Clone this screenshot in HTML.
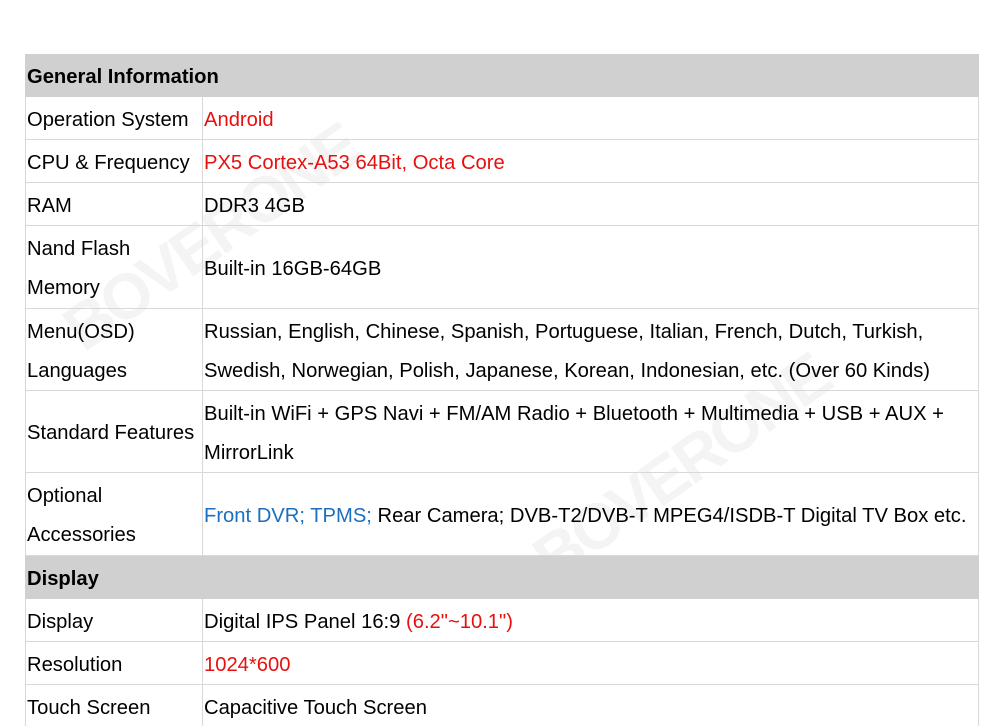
<!DOCTYPE html><html><head><style>
html,body{margin:0;width:1000px;height:726px;overflow:hidden}
body{background:#fff;position:relative;font-family:"Liberation Sans",Arial,sans-serif;font-size:20.2px;color:#000}
.r{position:absolute;left:25px;width:954px;border-bottom:1px solid #d8d8d8;box-sizing:border-box;z-index:1}
.h{background:#d0d0d0;font-weight:bold;border-bottom:none}
.c{position:absolute;top:4px;bottom:0;display:flex;align-items:center;line-height:39px}
.l{left:2px;width:175px}.v{left:179px;right:0}
.d{position:absolute;left:177px;top:0;bottom:0;border-left:1px solid #d8d8d8}
.red{color:#e8100e}.blue{color:#1a6fc0}
.wm{position:absolute;font-weight:bold;font-size:64px;color:#f4f4f4;transform:rotate(-35deg);font-family:"Liberation Sans",sans-serif;z-index:0;letter-spacing:-3px}
.t{position:absolute;left:25px;top:54px;width:954px;height:680px;border:1px solid #d8d8d8;border-top:none;box-sizing:border-box}
</style></head><body>
<div class="wm" style="left:40px;top:200px">BOVERONE</div>
<div class="wm" style="left:510px;top:430px">BOVERONE</div>
<div class="t"></div>
<div class="r h" style="top:54px;height:43px"><div class="c l" style="width:600px">General Information</div></div>
<div class="r" style="top:97px;height:43px"><div class="d"></div><div class="c l">Operation System</div><div class="c v red">Android</div></div>
<div class="r" style="top:140px;height:43px"><div class="d"></div><div class="c l">CPU &amp; Frequency</div><div class="c v red">PX5 Cortex-A53 64Bit, Octa Core</div></div>
<div class="r" style="top:183px;height:43px"><div class="d"></div><div class="c l">RAM</div><div class="c v">DDR3 4GB</div></div>
<div class="r" style="top:226px;height:83px"><div class="d"></div><div class="c l">Nand Flash<br>Memory</div><div class="c v">Built-in 16GB-64GB</div></div>
<div class="r" style="top:309px;height:82px"><div class="d"></div><div class="c l">Menu(OSD)<br>Languages</div><div class="c v">Russian, English, Chinese, Spanish, Portuguese, Italian, French, Dutch, Turkish,<br>Swedish, Norwegian, Polish, Japanese, Korean, Indonesian, etc. (Over 60 Kinds)</div></div>
<div class="r" style="top:391px;height:82px"><div class="d"></div><div class="c l">Standard Features</div><div class="c v">Built-in WiFi + GPS Navi + FM/AM Radio + Bluetooth + Multimedia + USB + AUX +<br>MirrorLink</div></div>
<div class="r" style="top:473px;height:83px"><div class="d"></div><div class="c l">Optional<br>Accessories</div><div class="c v"><span><span class="blue">Front DVR; TPMS;</span> Rear Camera; DVB-T2/DVB-T MPEG4/ISDB-T Digital TV Box etc.</span></div></div>
<div class="r h" style="top:556px;height:43px"><div class="c l">Display</div></div>
<div class="r" style="top:599px;height:43px"><div class="d"></div><div class="c l">Display</div><div class="c v"><span>Digital IPS Panel 16:9 <span class="red">(6.2"~10.1")</span></span></div></div>
<div class="r" style="top:642px;height:43px"><div class="d"></div><div class="c l">Resolution</div><div class="c v red">1024*600</div></div>
<div class="r" style="top:685px;height:43px"><div class="d"></div><div class="c l">Touch Screen</div><div class="c v">Capacitive Touch Screen</div></div>
</body></html>
